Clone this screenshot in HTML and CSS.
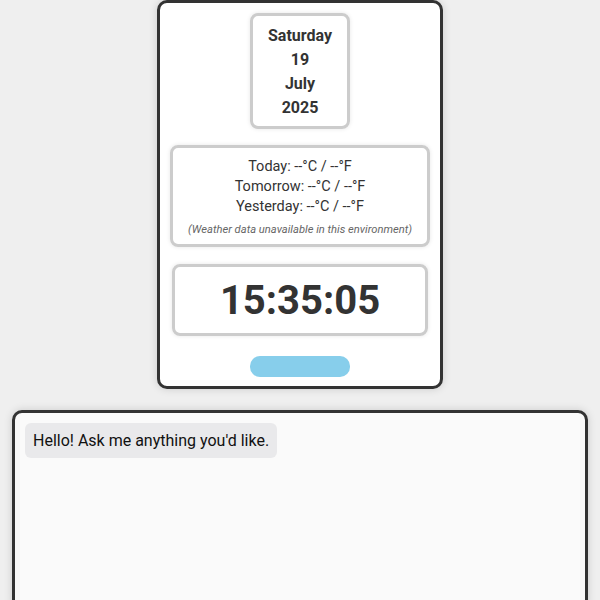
FILE: index.html
```html
<!DOCTYPE html>
<html>
<head>
<meta charset="utf-8">
<link rel="stylesheet" href="styles.css">
</head>
<body>
<div class="card">
  <div class="date">
    <div>Saturday</div>
    <div>19</div>
    <div>July</div>
    <div>2025</div>
  </div>
  <div class="weather">
    <div>Today: --°C / --°F</div>
    <div>Tomorrow: --°C / --°F</div>
    <div>Yesterday: --°C / --°F</div>
    <div class="note">(Weather data unavailable in this environment)</div>
  </div>
  <div class="clock">15:35:05</div>
  <div class="pill"></div>
</div>
<div class="chat">
  <div class="bubble">Hello! Ask me anything you'd like.</div>
</div>
</body>
</html>
```
FILE: styles.css
```css
html, body {
  margin: 0;
  padding: 0;
}
body {
  background: #efefef;
  font-family: Roboto, "Liberation Sans", sans-serif;
  color: #333;
  padding: 0 12px;
}
.card {
  box-sizing: border-box;
  width: 286px;
  margin: 0 auto;
  background: #fff;
  border: 3px solid #333;
  border-radius: 10px;
  padding: 10px 10px 9px;
  display: flex;
  flex-direction: column;
  align-items: center;
  box-shadow: 0 0 8px rgba(0,0,0,0.15);
}
.date {
  box-sizing: border-box;
  width: 100px;
  border: 3px solid #ccc;
  border-radius: 8px;
  padding: 8px 0 6px;
  text-align: center;
  font-weight: bold;
  font-size: 16px;
  line-height: 24px;
  box-shadow: 0 0 4px rgba(0,0,0,0.1);
}
.weather {
  box-sizing: border-box;
  width: 260px;
  margin-top: 16px;
  border: 3px solid #ccc;
  border-radius: 8px;
  padding: 9px 0 6px;
  text-align: center;
  font-size: 14.5px;
  line-height: 20px;
  box-shadow: 0 0 4px rgba(0,0,0,0.1);
}
.note {
  font-style: italic;
  font-size: 11.2px;
  line-height: 16px;
  color: #666;
  margin-top: 5px;
}
.clock {
  box-sizing: border-box;
  width: 256px;
  margin-top: 17px;
  border: 3px solid #ccc;
  border-radius: 8px;
  height: 72px;
  display: flex;
  align-items: center;
  justify-content: center;
  font-size: 40px;
  font-weight: bold;
  box-shadow: 0 0 4px rgba(0,0,0,0.1);
}
.pill {
  width: 100px;
  height: 21px;
  margin-top: 20px;
  border-radius: 10px;
  background: #87ceeb;
}
.chat {
  box-sizing: border-box;
  margin-top: 21px;
  height: 200px;
  background: #fafafa;
  border: 3px solid #333;
  border-radius: 10px;
  padding: 10px;
  display: flex;
  flex-direction: column;
  align-items: flex-start;
  box-shadow: 0 0 8px rgba(0,0,0,0.15);
}
.bubble {
  background: #e9e9eb;
  color: #111;
  border-radius: 6px;
  padding: 0 8px;
  height: 35px;
  line-height: 35px;
  font-size: 16px;
}
```
